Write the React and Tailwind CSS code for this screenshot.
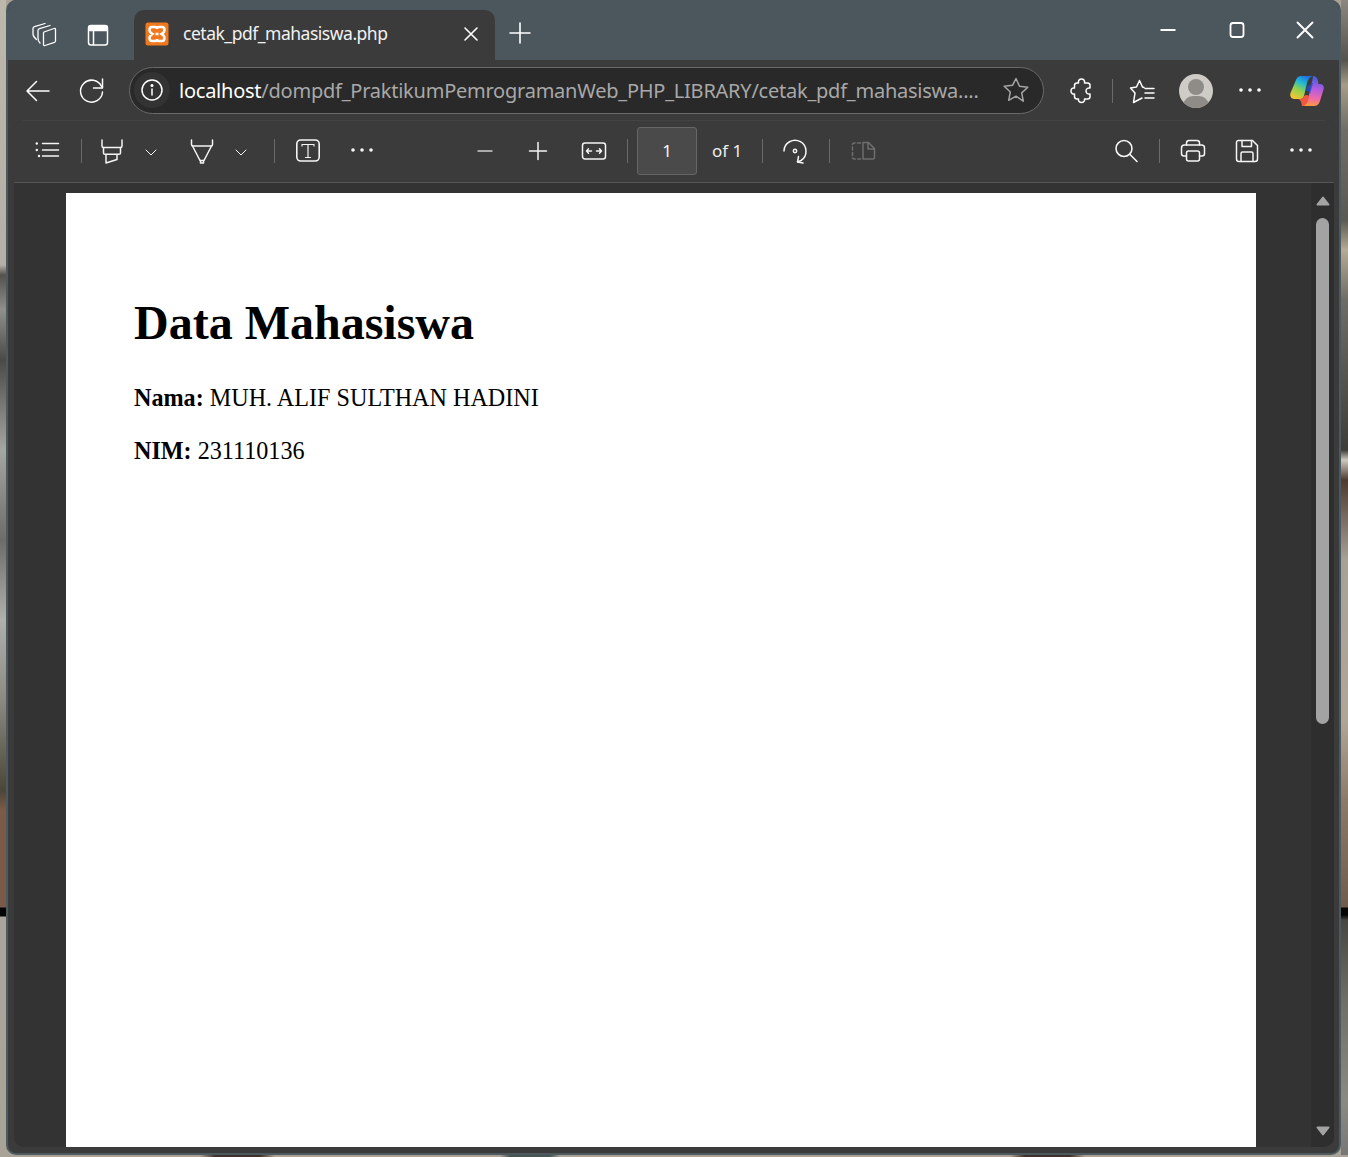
import React from "react";

const Ico = ({ className = "", children, size = 24, box = "0 0 24 24", sw = 1.6 }) => (
  <svg
    width={size}
    height={size}
    viewBox={box}
    fill="none"
    stroke="currentColor"
    strokeWidth={sw}
    strokeLinecap="round"
    strokeLinejoin="round"
    className={`shrink-0 overflow-visible ${className}`}
  >
    {children}
  </svg>
);

const Dots = ({ className = "" }) => (
  <Ico className={className}>
    <circle cx="3" cy="12" r="1.800" fill="currentColor" stroke="none" />
    <circle cx="12" cy="12" r="1.800" fill="currentColor" stroke="none" />
    <circle cx="21" cy="12" r="1.800" fill="currentColor" stroke="none" />
  </Ico>
);

const Chevron = ({ className = "" }) => (
  <Ico size={14} box="0 0 14 14" sw={1} className={className}>
    <path d="M2 5l5 5 5-5" />
  </Ico>
);

const Divider = ({ className = "" }) => <div className={`w-px h-[24px] shrink-0 bg-[#6a6a6a] ${className}`} />;

const ScrollArrow = ({ down = false, className = "" }) => (
  <svg width="14" height="10" viewBox="0 0 14 10" className={`shrink-0 ${className}`}>
    <path d={down ? "M1.500 1.500h11L7 8.500z" : "M7 1.500l5.500 7h-11z"} fill="#a3a3a3" stroke="#a3a3a3" strokeWidth="2" strokeLinejoin="round" />
  </svg>
);

const Copilot = ({ className = "" }) => (
  <svg width="34" height="32" viewBox="0 0 34 32" className={`shrink-0 ${className}`}>
    <defs>
      <linearGradient id="copA" x1="0.7" y1="0" x2="0.2" y2="1">
        <stop offset="0" stopColor="#1f6fe0" />
        <stop offset="0.3" stopColor="#1fb8d8" />
        <stop offset="0.6" stopColor="#8fd14f" />
        <stop offset="1" stopColor="#fbc531" />
      </linearGradient>
      <linearGradient id="copB" x1="0.5" y1="0" x2="0.4" y2="1">
        <stop offset="0" stopColor="#3b5fe0" />
        <stop offset="0.4" stopColor="#b05be0" />
        <stop offset="0.75" stopColor="#f06aa8" />
        <stop offset="1" stopColor="#fb9a3c" />
      </linearGradient>
    </defs>
    <path d="M11 1h12c-3 .5-5 3-6 7l-3 13c-1 2.500-2.500 3-4.500 3H4c-3 0-4.500-3-3.500-6L6 5c1-2.500 2.500-4 5-4z" fill="url(#copA)" />
    <path d="M23 1c3 0 4.500 2 5 5l.5 3h1.500c3 0 4.500 2.500 3.500 5.500L30 26c-1 3.500-3 5-6 5H12c3-.5 5-3 6-7l4-17c.5-2.500 1-5 1-6z" fill="url(#copB)" />
    <path d="M6 24c3 0 5 0 6 7 3 0 5-2 6-6l1-4c-1-1-2-1-3-1l-2 1c-1 3-3 3-8 3z" fill="#f2583e" />
    <path d="M22 8c-1 2-3 3-5 3l-1 5c3 0 4 1 4 3l3-11z" fill="#1d4ed8" opacity="0.75" />
  </svg>
);

export default function App() {
  return (
    <div className="flex flex-col w-[1348px] h-[1157px] overflow-hidden bg-[#a9a297] font-['Noto_Sans',sans-serif]">
      <div className="flex h-[1155px]">
        <div className="w-[6px] bg-[linear-gradient(180deg,#bdb7ac_0px,#b5afa5_265px,#55524c_275px,#8f8f8c_310px,#4c4a44_360px,#a5a5a2_450px,#6e6c66_540px,#b0b0ac_620px,#8c8a80_700px,#4a4638_790px,#7d5a48_810px,#7a5a48_907px,#050505_908px,#050505_916px,#aaa59b_917px,#a9a297_1157px)]" />

        {/* browser window */}
        <div className="flex flex-col w-[1335px] rounded-[10px] overflow-hidden bg-[#3b3b3b] border-x-2 border-b-2 border-[#4c5a60]">
          {/* title bar */}
          <div className="flex items-center h-[60px] pt-[6px] bg-[#4c565d] text-white">
            <Ico className="ml-[24px] mt-[2px]" sw={1.3}>
              <path d="M12 10L22 6.500c1-.3 1.500.2 1.500 1V19c0 .7-.3 1-1 1.300L13 23.500c-1 .3-1.500-.2-1.500-1V11c0-.5.2-.8.5-1z" />
              <path d="M8 21c-1.500-1.500-2-3-2-5V8.500c0-1 .5-1.500 1.500-1.800L18 3.500" />
              <path d="M4.500 17.500C2 15.500 1 14 1 12V6.500c0-1 .5-1.500 1.500-1.800L13 1.500" />
            </Ico>
            <Ico className="ml-[30px] mt-[3px]" sw={1.5}>
              <rect x="2.500" y="2.500" width="19" height="19.500" rx="2.500" />
              <path d="M3 3.500h18V7.500H3z" fill="currentColor" />
              <path d="M7.500 7.500v14" />
            </Ico>

            <div className="flex items-center self-end h-[50px] w-[361px] ml-[24px] pb-[4px] rounded-t-[10px] bg-[#3b3b3b]">
              <svg width="24" height="24" viewBox="0 0 24 24" className="ml-[11px] mt-[2px] shrink-0">
                <rect x="0.500" y="0.500" width="23" height="23" rx="2.500" fill="#f0791f" />
                <path d="M7 5h3.500c1 0 1.500 1 1.500 2 0-1 .8-2 1.800-2H17c1.500 0 2.500 1 2.500 3S18.200 11 16.500 12c1.700 1 3 2 3 4s-1 3-2.500 3h-3.200c-1 0-1.800-1-1.800-2 0 1-.5 2-1.500 2H7c-1.500 0-2.500-1-2.500-3s1.300-3 3-4C5.800 11 4.500 10 4.500 8S5.500 5 7 5z" fill="none" stroke="#fff" strokeWidth="2.400" />
                <path d="M10.500 12h3" stroke="#fff" strokeWidth="2.400" />
              </svg>
              <span className="ml-[14px] text-[17.5px] leading-[24px] whitespace-nowrap tracking-[-0.48px] text-[#f2f2f2]">cetak_pdf_mahasiswa.php</span>
              <Ico className="ml-auto mr-[12px] mt-[2px]" sw={1.6}>
                <path d="M6 6l12 12M18 6L6 18" />
              </Ico>
            </div>

            <Ico className="ml-[13px]" sw={1.6}>
              <path d="M12 2v20M2 12h20" />
            </Ico>

            <Ico className="ml-[624px] -mt-[6px]" sw={2}>
              <path d="M4.500 12h15" strokeLinecap="butt" />
            </Ico>
            <Ico className="ml-[45px] -mt-[6px]" sw={1.8}>
              <rect x="5.500" y="5" width="13" height="14" rx="2.500" />
            </Ico>
            <Ico className="ml-[44px] -mt-[6px]" sw={1.9}>
              <path d="M4.500 4.500l15 15M19.500 4.500l-15 15" />
            </Ico>
          </div>

          {/* address bar */}
          <div className="flex items-center h-[60px] text-white">
            <Ico className="ml-[18px] mt-[2px]" sw={1.5}>
              <path d="M1 12h22M10.500 2.500L1 12l9.500 9.500" />
            </Ico>
            <Ico className="ml-[30px] mt-[2px]" sw={1.5}>
              <path d="M22.500 0v9h-9" />
              <path d="M21.500 7.500A11 11 0 1 0 22.500 13" />
            </Ico>

            <div className="flex items-center w-[915px] h-[47px] ml-[25px] shrink-0 rounded-full bg-[#292929] border border-[#696969]">
              <div className="flex items-center justify-center shrink-0 w-[36px] h-[36px] ml-[4px] rounded-full bg-[#333333]">
                <Ico sw={1.5}>
                  <circle cx="12" cy="12" r="10" />
                  <path d="M12 11v6" />
                  <circle cx="12" cy="7.500" r="0.800" fill="currentColor" />
                </Ico>
              </div>
              <div className="ml-[9px] mt-[2px] text-[20px] leading-[28px] whitespace-nowrap tracking-[-0.24px] text-[#a8a8a8]">
                <span className="text-white">localhost</span>/dompdf_PraktikumPemrogramanWeb_PHP_LIBRARY/cetak_pdf_mahasiswa....
              </div>
              <Ico size={28} box="0 0 28 28" className="ml-auto mr-[13px] text-[#a5a5a5]" sw={1.5}>
                <path d="M14 2.500l3.500 7.700 8.300 1-6.100 5.700 1.600 8.300L14 20.200 6.700 24.300l1.600-8.300-6.100-5.700 8.300-1z" />
              </Ico>
            </div>

            <Ico size={26} box="0 0 26 26" className="ml-[25px] -mr-[2px]" sw={1.5}>
              <path d="M8 6h1.500c-.5-2.500 1-4 3-4s3.500 1.500 3 4h3c1.500 0 2.500 1 2.500 2.500V11c-2-.5-4 .8-4 3s2 3.500 4 3v2.500c0 1.500-1 2.500-2.500 2.500h-3c.5 2-1 3.500-3 3.500s-3.500-1.500-3-3.500H8c-1.500 0-2.500-1-2.500-2.500V17c-2 .5-3.500-1-3.500-3s1.500-3.500 3.500-3V8.500C5.500 7 6.500 6 8 6z" />
            </Ico>
            <Divider className="ml-[19px] mt-[2px]" />
            <Ico className="ml-[17px] mt-[2px]" sw={1.5}>
              <path d="M14 8.500L12.500 8 9.500 1.500 6.500 8 .5 9 5 14 3.500 23.500 12 19" />
              <path d="M15 9.500h9M15 14h9M15 19h9" />
            </Ico>
            <div className="relative w-[34px] h-[34px] ml-[25px] mt-[2px] shrink-0 rounded-full overflow-hidden bg-[#cfccc7]">
              <div className="absolute left-[9px] top-[5px] w-[16px] h-[16px] rounded-full bg-[#8f8b86]" />
              <div className="absolute left-[4px] top-[22px] w-[26px] h-[20px] rounded-full bg-[#8f8b86]" />
            </div>
            <Dots className="ml-[25px]" />
            <Copilot className="ml-[28px] mt-[2px]" />
          </div>

          {/* pdf viewer */}
          <div className="flex flex-col flex-1 min-h-0 ml-[6px] mr-[5px] mb-[6px] rounded-[10px] overflow-hidden bg-[#333333]">
            <div className="flex items-center shrink-0 h-[63px] pb-[2px] bg-[#3b3b3b] border-t border-[#434343] border-b border-b-[#565656] text-[#f5f5f5]">
              <Ico className="ml-[21px] -mt-[2px]" sw={1.5}>
                <path d="M7.500 5.500h16M7.500 12h16M7.500 18h16" />
                <circle cx="1.800" cy="5.500" r="1.200" fill="currentColor" stroke="none" />
                <circle cx="1.800" cy="12" r="1.200" fill="currentColor" stroke="none" />
                <circle cx="4" cy="18" r="1.200" fill="currentColor" stroke="none" />
              </Ico>
              <Divider className="ml-[22px]" />
              <Ico className="ml-[18px]" sw={1.5}>
                <path d="M2 1v6c0 1 .5 1.500 1.500 1.500h17c1 0 1.500-.5 1.500-1.500V1" />
                <path d="M3.500 8.500v5.500c0 .8.500 1.300 1.500 1.300h14c1 0 1.500-.5 1.500-1.300V8.500" />
                <path d="M6 15.500V24l11-3.500v-5" />
              </Ico>
              <Chevron className="ml-[20px] mt-[3px]" />
              <Ico className="ml-[32px]" sw={1.5}>
                <path d="M1.500 1v4.500c0 1 .5 1.500 1.500 1.500h18c1 0 1.500-.5 1.500-1.500V1" />
                <path d="M2.500 7l7.500 14.500h4L21.500 7" />
                <path d="M10.500 21.500V24h3v-2.500" />
              </Ico>
              <Chevron className="ml-[20px] mt-[3px]" />
              <Divider className="ml-[26px]" />
              <Ico className="ml-[21px]" sw={1.6}>
                <rect x="0.800" y="1" width="22.400" height="21" rx="4" />
                <path d="M6 7V5.500h12V7M12 5.500v13M9.500 18.500h5" strokeWidth="1.200" />
              </Ico>
              <Dots className="ml-[30px] -mt-[2px]" />

              <Ico className="ml-[99px] text-[#d0d0d0]" sw={1.5}>
                <path d="M4.500 12h15" strokeLinecap="butt" />
              </Ico>
              <Ico className="ml-[29px]" sw={1.5}>
                <path d="M12 3.500v17M3.500 12h17" />
              </Ico>
              <Ico className="ml-[32px]" sw={1.5}>
                <rect x="0.500" y="4" width="23" height="16" rx="2.500" />
                <path d="M4.500 12h5M6.500 9.800L4.500 12l2 2.200M14.500 12h5M17.500 9.800l2 2.200-2 2.200" />
              </Ico>
              <Divider className="ml-[21px]" />
              <div className="flex items-center justify-center w-[60px] h-[48px] ml-[9px] shrink-0 rounded-[3px] bg-[#4a4a4a] border border-[#666666] text-[17px] pt-[1px]">1</div>
              <span className="w-[31px] ml-[15px] shrink-0 text-[17px] whitespace-nowrap pt-[1px] text-[#eeeeee]">of 1</span>
              <Divider className="ml-[19px]" />
              <Ico className="ml-[20px]" sw={1.5}>
                <path d="M1 12a11 11 0 1 1 17 9.500l-3.500 1.500" />
                <path d="M15.500 17.500l-1 5.500 5.500 1" />
                <circle cx="12" cy="12" r="1.700" />
              </Ico>
              <Divider className="ml-[22px]" />
              <Ico className="ml-[21px] text-[#6e6e6e]" sw={1.5}>
                <path d="M9.500 4H3a1.500 1.500 0 0 0-1.500 1.500v13A1.500 1.500 0 0 0 3 20h6.500" strokeDasharray="3 2.500" />
                <path d="M12 3.500h5.500l6 6v9a1.500 1.500 0 0 1-1.500 1.500H12zM17 3.500v6.500h6.500" />
              </Ico>

              <Ico className="ml-[239px]" sw={1.6}>
                <circle cx="10" cy="9.500" r="8" />
                <path d="M16 15.500l7 7" />
              </Ico>
              <Divider className="ml-[21px]" />
              <Ico className="ml-[21px]" sw={1.5}>
                <path d="M5.500 6V4c0-1.500 1-2.500 2.500-2.500h8c1.500 0 2.500 1 2.500 2.500v2" />
                <path d="M5.500 17H3c-1.500 0-2.500-1-2.500-2.500V9c0-1.700 1.300-3 3-3h17c1.700 0 3 1.300 3 3v5.500c0 1.500-1 2.500-2.500 2.500h-2.500" />
                <rect x="5.500" y="12" width="13" height="10" rx="2" />
              </Ico>
              <Ico className="ml-[30px]" sw={1.5}>
                <path d="M3.500 1.500h14l5 5v13.500a2.500 2.500 0 0 1-2.500 2.500H4a2.500 2.500 0 0 1-2.500-2.500V3.500a2 2 0 0 1 2-2z" />
                <path d="M7 1.500v6h9.500v-6M6 22.500V14.500a1.500 1.500 0 0 1 1.500-1.500h9a1.500 1.500 0 0 1 1.500 1.500v8" />
              </Ico>
              <Dots className="ml-[30px] -mt-[2px]" />
            </div>

            <div className="flex flex-1 min-h-0">
              <div className="flex-1 pt-[10px] pl-[52px] min-h-0">
                <div className="w-[1190px] h-full pl-[68px] pt-[100px] bg-white text-black font-['Liberation_Serif',serif]">
                  <h1 className="text-[48px] leading-[60px] font-bold">Data Mahasiswa</h1>
                  <p className="mt-[30px] text-[24.15px] leading-[30px]"><b>Nama:</b> MUH. ALIF SULTHAN HADINI</p>
                  <p className="mt-[23px] text-[24.15px] leading-[30px]"><b>NIM:</b> 231110136</p>
                </div>
              </div>
              <div className="flex flex-col items-center w-[23px] shrink-0 pt-[13px] pb-[11px] bg-[#2e2e2e]">
                <ScrollArrow />
                <div className="w-[13px] h-[506px] mt-[12px] rounded-full bg-[#a3a3a3]" />
                <ScrollArrow down className="mt-auto" />
              </div>
            </div>
          </div>
        </div>

        <div className="w-[7px] bg-[linear-gradient(180deg,#8c8880_0px,#55534e_60px,#a59c88_85px,#6f6d66_130px,#5a5852_220px,#b5ab95_250px,#6e6c66_300px,#3f3d38_450px,#cfc9bd_460px,#4d3a30_480px,#a7a196_560px,#b0a698_720px,#8c7a68_800px,#6f5c4c_907px,#060606_908px,#060606_915px,#46453f_920px,#6f6e66_1000px,#8b8a82_1100px,#777_1157px)]" />
      </div>

      <div className="h-[2px] bg-[linear-gradient(90deg,#a9a297_0px,#a9a297_200px,#3b342b_215px,#3b342b_260px,#a9a297_275px,#a9a297_500px,#4a5552_510px,#4a5552_550px,#a9a297_560px,#a9a297_1010px,#3b342b_1025px,#3b342b_1070px,#a9a297_1085px,#a9a297_1348px)]" />
    </div>
  );
}
